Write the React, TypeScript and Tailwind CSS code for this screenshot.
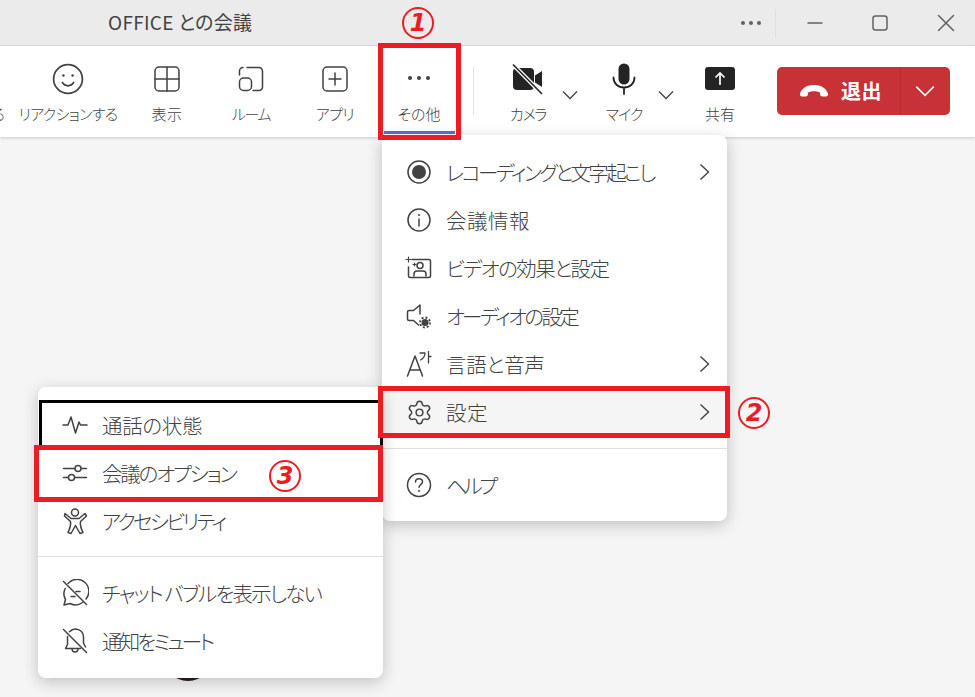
import type { ReactNode } from "react";
import { Settings } from "lucide-react";

const FONT = "font-['Noto_Sans_CJK_JP','Noto_Sans',sans-serif] font-light [font-feature-settings:'palt']";
const LINE = { fill: "none", stroke: "currentColor", strokeWidth: 1.5, strokeLinecap: "round", strokeLinejoin: "round" } as const;

function Icon({ size = 28, children }: { size?: number; children: ReactNode }) {
  return (
    <svg width={size} height={size} viewBox="0 0 28 28" {...LINE}>
      {children}
    </svg>
  );
}

function Chevron({ className }: { className?: string }) {
  return (
    <svg width="16" height="10" viewBox="0 0 16 10" className={className} fill="none" stroke="currentColor" strokeWidth="1.3">
      <path d="M1 1.5 8 8.5l7-7" />
    </svg>
  );
}

function MenuChevron() {
  return (
    <svg width="12" height="18" viewBox="0 0 12 18" fill="none" stroke="#424242" strokeWidth="1.4" className="absolute right-[16px]">
      <path d="M1.5 1.5 9.5 9l-8 7.5" />
    </svg>
  );
}

function ToolbarItem({ label, icon, className, labelClass = "" }: { label: string; icon: ReactNode; className: string; labelClass?: string }) {
  return (
    <div className={`flex flex-col items-center shrink-0 ${className}`}>
      <div className="h-[32px] flex items-center justify-center text-[#424242]">{icon}</div>
      <span className={`mt-[9px] text-[15px] leading-[20px] text-[#424242] whitespace-nowrap ${labelClass}`}>{label}</span>
    </div>
  );
}

// kana in the reference's font run narrower than Noto's, so each row gets its own tracking
function MenuRow({ icon, label, arrow, active, tracking }: { icon: ReactNode; label: string; arrow?: boolean; active?: boolean; tracking: string }) {
  return (
    <div className={`relative h-[48px] flex items-center pl-[23px] ${active ? "bg-[#f5f5f5]" : ""}`}>
      <span className="w-[28px] h-[28px] flex items-center justify-center text-[#424242] shrink-0">{icon}</span>
      <span className={`ml-[13px] text-[20.5px] leading-[26px] text-[#424242] whitespace-pre ${tracking}`}>{label}</span>
      {arrow && <MenuChevron />}
    </div>
  );
}

function Numbered({ n, className }: { n: string; className: string }) {
  return (
    <div className={`absolute w-[32px] h-[32px] rounded-full border-2 border-[#ed1c24] flex items-center justify-center text-[#ed1c24] text-[24px] leading-none font-bold italic font-['DejaVu_Sans',sans-serif] ${className}`}>
      {n}
    </div>
  );
}

export default function App() {
  return (
    <div className={`relative h-[697px] w-[975px] overflow-hidden bg-[#f5f5f5] flex flex-col ${FONT}`}>
      {/* title bar */}
      <div className="h-[46px] shrink-0 bg-[#ebebeb] border-b border-[#dcdcdc] flex items-center text-[#424242]">
        <span className="ml-[108px] text-[19px] font-normal tracking-[0.3px]">OFFICE との会議</span>
        <div className="ml-auto flex items-center">
          <div className="flex gap-[4px]">
            <span className="w-[4px] h-[4px] rounded-full bg-[#616161]" />
            <span className="w-[4px] h-[4px] rounded-full bg-[#616161]" />
            <span className="w-[4px] h-[4px] rounded-full bg-[#616161]" />
          </div>
          <div className="ml-[14px] w-px h-[28px] bg-[#dedede]" />
          <svg width="18" height="18" viewBox="0 0 18 18" className="ml-[30px] text-[#616161]" {...LINE}>
            <path d="M2 9h14" />
          </svg>
          <svg width="18" height="18" viewBox="0 0 18 18" className="ml-[47px] text-[#616161]" {...LINE}>
            <rect x="2" y="2" width="14" height="14" rx="2.5" />
          </svg>
          <svg width="18" height="18" viewBox="0 0 18 18" className="ml-[48px] mr-[20px] text-[#616161]" {...LINE}>
            <path d="M1.5 1.5l15 15M16.5 1.5l-15 15" />
          </svg>
        </div>
      </div>

      {/* toolbar */}
      <div className="h-[91px] shrink-0 bg-white shadow-[0_1px_3px_rgba(0,0,0,0.18)] flex items-start pt-[17px] overflow-hidden">
        <div className="w-[5px] shrink-0 mr-[13px] overflow-hidden flex justify-end mt-[41px]">
          <span className="text-[15px] leading-[20px] text-[#424242] whitespace-nowrap">する</span>
        </div>
        <ToolbarItem
          className="w-[100px] mr-[7px]"
          labelClass="tracking-[-0.7px]"
          label="リアクションする"
          icon={
            <Icon size={32}>
              <circle cx="14" cy="14" r="12.6" />
              <path d="M9 17c1.2 2 3 3 5 3s3.8-1 5-3" />
              <circle cx="10" cy="11" r="1.1" fill="currentColor" stroke="none" />
              <circle cx="18" cy="11" r="1.1" fill="currentColor" stroke="none" />
            </Icon>
          }
        />
        <ToolbarItem
          className="w-[84px]"
          labelClass="tracking-[0.5px]"
          label="表示"
          icon={
            <Icon>
              <rect x="2" y="2" width="24" height="24" rx="4" />
              <path d="M14 2v24M2 14h24" />
            </Icon>
          }
        />
        <ToolbarItem
          className="w-[84px]"
          labelClass="tracking-[-1.4px]"
          label="ルーム"
          icon={
            <Icon>
              <path d="M10 2.5h12a3.5 3.5 0 0 1 3.5 3.5v16a3.5 3.5 0 0 1-3.5 3.5H16" />
              <path d="M2.5 10V6A3.5 3.5 0 0 1 6 2.5" />
              <rect x="2.5" y="13" width="12" height="12.5" rx="4" />
            </Icon>
          }
        />
        <ToolbarItem
          className="w-[84px]"
          labelClass="tracking-[-0.6px]"
          label="アプリ"
          icon={
            <Icon>
              <rect x="2" y="2" width="24" height="24" rx="4" />
              <path d="M14 8v12M8 14h12" />
            </Icon>
          }
        />
        <ToolbarItem
          className="w-[84px]"
          label="その他"
          icon={
            <div className="flex gap-[5px] -mt-[2px]">
              <span className="w-[4px] h-[4px] rounded-full bg-[#424242]" />
              <span className="w-[4px] h-[4px] rounded-full bg-[#424242]" />
              <span className="w-[4px] h-[4px] rounded-full bg-[#424242]" />
            </div>
          }
        />
        <div className="ml-[12px] w-px h-[48px] mt-[4px] bg-[#e0e0e0] shrink-0" />
        <ToolbarItem
          className="w-[64px] ml-[22px]"
          labelClass="tracking-[-1.2px]"
          label="カメラ"
          icon={
            <svg width="34" height="32" viewBox="0 0 34 32">
              <rect x="2" y="5" width="21" height="22" rx="4" fill="#242424" />
              <path d="M24 12.5 31 8v16l-7-4.5z" fill="#242424" />
              <path d="M2 1.5 31 31" stroke="#fff" strokeWidth="4" />
              <path d="M2 1.5 31 31" stroke="#242424" strokeWidth="1.6" />
            </svg>
          }
        />
        <Chevron className="mt-[27px] ml-[2px] text-[#424242] shrink-0" />
        <ToolbarItem
          className="w-[64px] ml-[14px]"
          labelClass="tracking-[-1px]"
          label="マイク"
          icon={
            <svg width="28" height="32" viewBox="0 0 28 32" fill="none">
              <rect x="8.5" y="0.5" width="11" height="21" rx="5.5" fill="#242424" />
              <path d="M3.5 14.5c0 6 4.5 10 10.5 10s10.5-4 10.5-10M14 24.5V31" stroke="#242424" strokeWidth="1.8" strokeLinecap="round" />
            </svg>
          }
        />
        <Chevron className="mt-[27px] ml-[2px] text-[#424242] shrink-0" />
        <ToolbarItem
          className="w-[64px] ml-[14px]"
          label="共有"
          icon={
            <svg width="30" height="24" viewBox="0 0 30 24" fill="none">
              <rect width="30" height="23" rx="3" fill="#242424" />
              <path d="M15 18V6M10.5 10.5 15 6l4.5 4.5" stroke="#fff" strokeWidth="1.7" />
            </svg>
          }
        />
        <div className="ml-[25px] mt-[4px] w-[173px] h-[48px] rounded-[5px] bg-[#c83237] flex items-center text-white shrink-0">
          <div className="w-[124px] h-full flex items-center border-r border-[#b02a2f]">
            <svg width="30" height="14" viewBox="0 0 30 14" className="ml-[22px]" fill="#fff">
              <path d="M1 9.5C3 3.5 9 1 15 1s12 2.5 14 8.5c.4 1.5-.5 3-2 3h-3.5c-1.5 0-2.5-1-2.5-2.5V8.5c-1.8-.8-4-1.2-6-1.2s-4.2.4-6 1.2V10c0 1.5-1 2.5-2.5 2.5H3c-1.5 0-2.4-1.5-2-3z" />
            </svg>
            <span className="ml-[12px] text-[20px] leading-none font-bold tracking-[0.5px]">退出</span>
          </div>
          <Chevron className="ml-[16px] scale-125" />
        </div>
      </div>

      {/* avatar peeking out under the second menu */}
      <div className="absolute left-[163px] top-[650px] w-[50px] h-[31px] rounded-b-full bg-[#2b1d1f]" />

      {/* more menu */}
      <div className="absolute left-[382px] top-[135px] w-[345px] h-[386px] bg-white rounded-lg shadow-[0_4px_16px_rgba(0,0,0,0.22)] pt-[13px]">
        <MenuRow
          tracking="tracking-[-2.7px]"
          arrow
          label="レコーディングと文字起こし"
          icon={
            <Icon>
              <circle cx="14" cy="14" r="11" />
              <circle cx="14" cy="14" r="7" fill="currentColor" stroke="none" />
            </Icon>
          }
        />
        <MenuRow
          tracking="tracking-[0.5px]"
          label="会議情報"
          icon={
            <Icon>
              <circle cx="14" cy="14" r="11" />
              <path d="M14 13v7" />
              <circle cx="14" cy="9" r="1" fill="currentColor" stroke="none" />
            </Icon>
          }
        />
        <MenuRow
          tracking="tracking-[-1.6px]"
          label="ビデオの効果と設定"
          icon={
            <Icon>
              <path d="M7 5.5h17a1.5 1.5 0 0 1 1.5 1.5v15a1.5 1.5 0 0 1-1.5 1.5H5A1.5 1.5 0 0 1 3.5 22V13" />
              <circle cx="15" cy="11.5" r="3" />
              <path d="M9 22v-2c0-2 1.5-3 3-3h6c1.5 0 3 1 3 3v2" />
              <path d="M3.5 3v5M1 5.5h5M9.5 9v3M8 10.5h3" strokeWidth="1.2" />
            </Icon>
          }
        />
        <MenuRow
          tracking="tracking-[-2.65px]"
          label="オーディオの設定"
          icon={
            <Icon>
              <path d="M15 12V3L8.5 8.500H4A1.5 1.5 0 0 0 2.5 10v7A1.5 1.5 0 0 0 4 18.5h4.5l5 4.5" />
              <circle cx="20" cy="20.5" r="3.5" fill="currentColor" stroke="none" />
              <circle cx="20" cy="20.5" r="5" strokeWidth="1.8" strokeDasharray="2 1.9" strokeLinecap="butt" />
            </Icon>
          }
        />
        <MenuRow
          tracking="tracking-[-0.3px]"
          arrow
          label="言語と音声"
          icon={
            <Icon>
              <path d="M2.5 26 10 6l7.5 20M5 20h10" />
              <path d="M15 3h5c0 3-1.5 5.5-4.5 7M23.5 1.500V13M23.5 6.5H26" strokeWidth="1.3" />
            </Icon>
          }
        />
        <MenuRow
          tracking="tracking-[0.5px]"
          active
          arrow
          label="設定"
          icon={<Settings size={27} strokeWidth={1.3} />}
        />
        <div className="mt-[12px] mb-[12px] h-px bg-[#e0e0e0]" />
        <MenuRow
          tracking="tracking-[-3.3px]"
          label="ヘルプ"
          icon={
            <Icon>
              <circle cx="14" cy="14" r="11.5" />
              <path d="M10.5 11c0-2 1.5-3.200 3.5-3.200s3.5 1.200 3.5 3c0 2.800-3.5 2.700-3.5 5.500" />
              <circle cx="14" cy="20" r="1" fill="currentColor" stroke="none" />
            </Icon>
          }
        />
      </div>

      {/* settings submenu */}
      <div className="absolute left-[38px] top-[387px] w-[345px] h-[291px] bg-white rounded-lg shadow-[0_4px_16px_rgba(0,0,0,0.22)] pt-[14px]">
        <div className="absolute left-[1px] top-[13px] right-0 h-[48px] border-[3px] border-black" />
        <MenuRow
          tracking="tracking-[-0.3px]"
          label="通話の状態"
          icon={
            <Icon>
              <path d="M2 14h5l3-8 4.5 16L18 11l1.5 3H26" />
            </Icon>
          }
        />
        <MenuRow
          tracking="tracking-[-2.15px]"
          label="会議のオプション"
          icon={
            <Icon>
              <path d="M2.5 9.5h11M20.5 9.5h5M2.5 18.5h4.5M14 18.5h11.5" />
              <circle cx="17" cy="9.5" r="3" />
              <circle cx="10.5" cy="18.5" r="3" />
            </Icon>
          }
        />
        <MenuRow
          tracking="tracking-[-2.65px]"
          label="アクセシビリティ"
          icon={
            <Icon>
              <circle cx="14" cy="5.5" r="3.5" />
              <path d="M4 6.5l6 5h8l6-5 1.5 2.5-6 5.5c-.5 3 .5 7 2.500 11l-3 1-4.5-8-4.5 8-3-1c2-4 3-8 2.500-11l-6-5.500z" />
            </Icon>
          }
        />
        <div className="mt-[11px] mb-[12px] h-px bg-[#e0e0e0]" />
        <MenuRow
          tracking="tracking-[-1.85px]"
          label="チャット バブルを表示しない"
          icon={
            <Icon>
              <path d="M7 4.5A11.5 11.5 0 0 1 25 20M21.5 23.5A11.5 11.5 0 0 1 9 24.5l-6 1.5 1.5-5.5a11.5 11.5 0 0 1-.3-11" />
              <path d="M2.5 2.5l23 23M15 12.5h4M10 17.5h4" />
            </Icon>
          }
        />
        <MenuRow
          tracking="tracking-[-2.85px]"
          label="通知をミュート"
          icon={
            <Icon>
              <path d="M8.5 4.8A8 8 0 0 1 22.5 10v6l2 4M19.5 21.5h-15l2-4V9.5" />
              <path d="M11 21.5c0 2 1.3 3.5 3 3.5s3-1.5 3-3.5M2.5 2.5l23 23" />
            </Icon>
          }
        />
      </div>

      {/* red annotations */}
      <div className="absolute left-[378px] top-[43px] w-[83px] h-[97px] border-[5px] border-[#ed1c24]">
        <div className="absolute left-[1px] right-[1px] bottom-[1px] h-[3px] bg-[#6264c8]" />
      </div>
      <div className="absolute left-[378px] top-[386px] w-[352px] h-[52px] border-[5px] border-[#ed1c24]" />
      <div className="absolute left-[34px] top-[445px] w-[349px] h-[57px] border-[5px] border-[#ed1c24]" />
      <Numbered n="1" className="left-[402px] top-[7px]" />
      <Numbered n="2" className="left-[738px] top-[397px]" />
      <Numbered n="3" className="left-[269px] top-[460px]" />
    </div>
  );
}
